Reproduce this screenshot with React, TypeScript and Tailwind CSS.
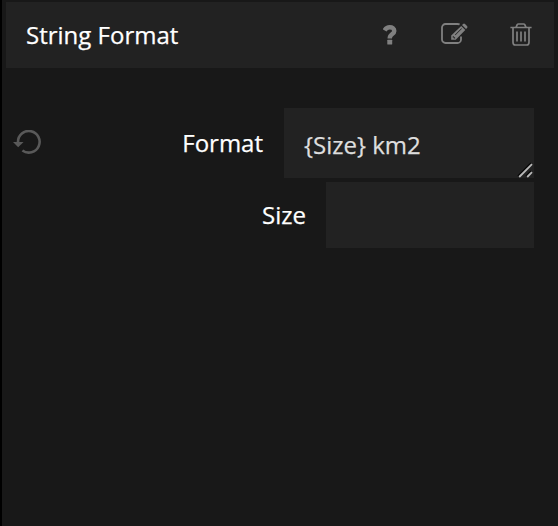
function HelpIcon() {
  return (
    <svg className="h-5 w-[14px]" viewBox="0 0 14 20" fill="none">
      <path d="M1.6 5.4C2.9 3.2 4.5 2.3 6.7 2.3C9.4 2.3 11.3 3.8 11.3 5.9C11.3 9.2 6.7 9 6.7 13.4" stroke="#808080" strokeWidth="4.4" />
      <rect x="4.3" y="14.8" width="4.9" height="4.6" rx=".5" fill="#808080" />
    </svg>
  );
}

function EditIcon() {
  return (
    <svg className="h-[22px] w-[27px]" viewBox="0 0 27 22" fill="none">
      <path d="M18.6 1.6C18 1.2 17.3 1 16.5 1H4.5A3.5 3.5 0 0 0 1 4.5V16.5A3.5 3.5 0 0 0 4.5 20H16.5A3.5 3.5 0 0 0 20 16.5V13.6" stroke="#808080" strokeWidth="1.8" />
      <path fillRule="evenodd" clipRule="evenodd" d="M20.2 3L24.3 7.1L14.7 16.7H10.2V12.6ZM12.2 13L11.7 13.5V14.4H12.8V15.5H13.7L14.4 14.9ZM13.9 11.8L14.4 12.3L20.9 5.8L20.4 5.3Z" fill="#808080" />
      <path d="M21 2.1L22.1 1Q23 0 24 1L26 3Q27 4 26.1 5L25 6.1Z" fill="#808080" />
    </svg>
  );
}

function TrashIcon() {
  return (
    <svg className="h-[23px] w-[22px]" viewBox="0 0 22 23" fill="none" stroke="#808080" strokeWidth="1.7">
      <path d="M.4 4.5H21.6M6 4.4L7.2 1.7Q7.6 1 8.5 1H13.5Q14.4 1 14.8 1.7L16 4.4M3 4.5V19.2Q3 22 5.4 22H16.6Q19 22 19 19.2V4.5M7 8.5V18.5M11 8.5V18.5M15 8.5V18.5" />
    </svg>
  );
}

function ResetIcon() {
  return (
    <svg className="h-6 w-7" viewBox="0 0 28 24" fill="none">
      <path d="M5 12A10.8 10.8 0 1 1 9.4 20.5" stroke="#595959" strokeWidth="2.6" />
      <path d="M0 12H10.5L5.2 17.2Z" fill="#595959" />
    </svg>
  );
}

function ResizeGrip() {
  return (
    <svg className="h-4 w-4" viewBox="0 0 16 16" fill="none">
      <path d="M1 14L14 1M9 14L14 9" stroke="#080808" strokeWidth="1.6" />
      <path d="M2.2 15L15 2.2M10.2 15L15 10.2" stroke="#b8b8b8" strokeWidth="1.8" />
    </svg>
  );
}

export default function App() {
  return (
    <main className="h-[526px] w-[558px] border-l-2 border-black bg-[#181818] pt-0.5 pr-1 pl-1 font-['Open_Sans',sans-serif] text-[24px] leading-8 text-white [-webkit-text-stroke:0.25px_currentColor]">
      <header className="flex h-[66px] items-center bg-[#222222] pr-[22px] pl-5">
        <h1 className="flex-1">String Format</h1>
        <div className="flex items-center">
          <button aria-label="Help"><HelpIcon /></button>
          <button aria-label="Edit" className="mb-0.5 ml-[44px]"><EditIcon /></button>
          <button aria-label="Delete" className="mb-0.5 ml-[42px]"><TrashIcon /></button>
        </div>
      </header>
      <section className="mt-10 flex flex-col gap-1 pr-5 pl-[7px]">
        <div className="flex h-[70px] items-center">
          <button aria-label="Reset" className="mb-0.5"><ResetIcon /></button>
          <label className="mr-[21px] flex-1 text-right">Format</label>
          <div className="flex h-full w-[250px] items-center justify-between bg-[#222222] pl-5 text-[#dedede]">
            <span className="pt-1">{"{Size} km2"}</span>
            <span className="mr-px self-end"><ResizeGrip /></span>
          </div>
        </div>
        <div className="flex h-[66px] items-center justify-end">
          <label className="mr-5">Size</label>
          <div className="h-full w-[208px] bg-[#222222]" />
        </div>
      </section>
    </main>
  );
}
